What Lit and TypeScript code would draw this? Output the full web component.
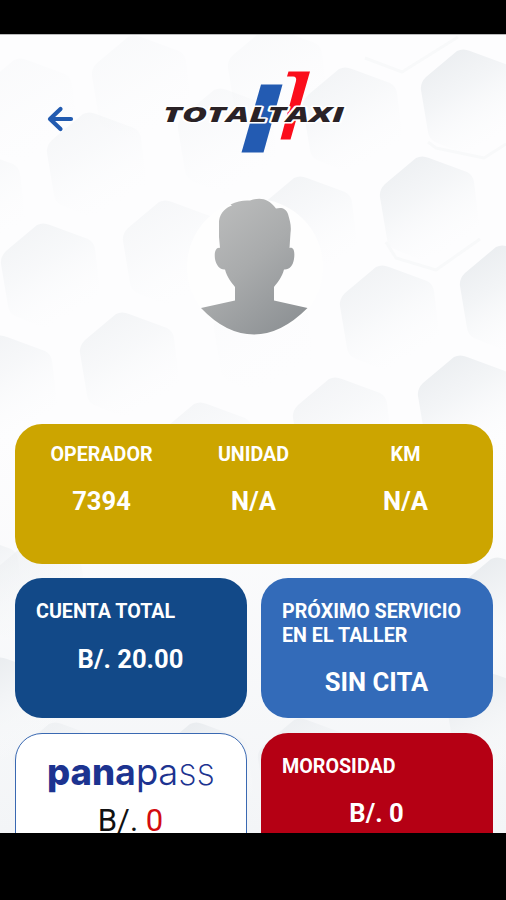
import { LitElement, html, svg, css } from "lit";
import { customElement } from "lit/decorators.js";

// x, y of the top corner of each hexagon, then its strength
const HEXES: [number, number, number][] = [
  [20, 5, 0.15], [134, -18, 0.2], [270, -26, 0.2], [345, 14, 0.5], [463, -4, 0.85],
  [89, 59, 0.35], [220, 35, 0.25], [-32, 95, 0.35], [422, 103, 0.75], [300, 123, 0.5],
  [165, 147, 0.35], [43, 170, 0.5], [382, 212, 0.6], [502, 192, 0.9], [122, 259, 0.5],
  [256, 235, 0.1], [0, 282, 0.55], [335, 324, 0.5], [460, 302, 0.85], [200, 349, 0.4],
  [-34, 480, 0.9], [497, 504, 1], [0, 604, 1], [196, 669, 1], [490, 620, 1], [30, 490, 0.5], [55, 669, 0.6], [300, 665, 0.7],
];

@customElement("tt-backdrop")
class Backdrop extends LitElement {
  static styles = css`
    :host { display: block; }
    svg { display: block; width: 100%; height: 100%; }
  `;
  render() {
    return html`<svg viewBox="0 0 506 799" preserveAspectRatio="xMidYMin slice">
      <defs>
        <linearGradient id="face" x1="0.25" y1="0.05" x2="0.7" y2="0.85">
          <stop offset="0" stop-color="#e9ecef" />
          <stop offset="0.4" stop-color="#f2f4f6" />
          <stop offset="1" stop-color="#fafbfc" stop-opacity="0" />
        </linearGradient>
        <linearGradient id="fade" x1="0" y1="0" x2="0" y2="1">
          <stop offset="0.5" stop-color="#f5f6f8" stop-opacity="0" />
          <stop offset="1" stop-color="#f3f5f7" />
        </linearGradient>
      </defs>
      <rect width="506" height="799" fill="#fdfdfe" />
      <rect width="506" height="799" fill="url(#fade)" />
      <g fill="none" stroke="#f8f9fa" stroke-width="3" stroke-linejoin="round">
        <path d="M365 24 L402 38 L458 3" />
        <path d="M428 108 L436 114 L484 124 L506 110" />
        <path d="M386 208 L396 224 L436 236 L480 205" />
      </g>
      ${HEXES.map(
        ([x, y, o]) => svg`<path transform="translate(${x} ${y + 40})" opacity=${o} fill="url(#face)"
          d="M-6 -19 Q0 -22 7 -19 L45 -5 Q51 -2 52 5 L57 46 Q58 53 52 58 L20 84 Q13 89 6 86 L-28 72 Q-34 69 -35 62 L-42 20 Q-43 13 -37 7 Z" />`
      )}
    </svg>`;
  }
}

@customElement("tt-logo")
class Logo extends LitElement {
  static styles = css`
    :host { display: block; width: 190px; height: 86px; }
    svg { display: block; width: 100%; height: 100%; overflow: visible; }
    .word { font: italic 800 21.5px "Open Sans", sans-serif; fill: #2a2226; }
    .halo { stroke: #fff; stroke-width: 3px; stroke-linejoin: round; paint-order: stroke; }
  `;
  render() {
    return html`<svg viewBox="0 0 190 86">
      <path d="M103 15.500 H124.500 L105.500 83.500 H83.500 Z" fill="#235bb2" />
      <path d="M130.500 2.500 H152 L132.500 70.500 H122.500 L138 12 Q139 7.500 135 7.500 H129 Z" fill="#fb0d1b" />
      <text class="word halo" x="5" y="52.500" textLength="181" lengthAdjust="spacingAndGlyphs">TOTALTAXI</text>
    </svg>`;
  }
}

@customElement("tt-avatar")
class Avatar extends LitElement {
  static styles = css`
    :host { display: block; width: 136px; height: 136px; border-radius: 50%; background: #fefefe; }
    svg { display: block; width: 100%; height: 100%; overflow: visible; }
  `;
  render() {
    return html`<svg viewBox="0 0 136 136">
      <defs>
        <linearGradient id="tone" x1="0.1" y1="0" x2="0.75" y2="1">
          <stop offset="0" stop-color="#bdbebe" />
          <stop offset="0.5" stop-color="#a9abac" />
          <stop offset="1" stop-color="#8e9295" />
        </linearGradient>
      </defs>
      <path fill="url(#tone)" d="M32 22 C33 13 40 8 45 6.500 L43.500 5.500 C50 2 57 1 63 1.500 C73 -2 81 -1 89 9.500 C94 8 99 9 101 15
        C103 22 104.500 27 103.500 34 L102.500 49 C107 48 108 53 107 60 C106 67 102 71 97 70.500 C95 78 91 83 87 88 V101.500
        L120.500 109 Q94 135.500 67 135.500 Q39 135.500 14 109 L48 101.500 V88 C44 83 40 78 38 70.500 C33 71 29 66 28 60 C27 53 29 48 33 49 L32 38 Z" />
    </svg>`;
  }
}

@customElement("app-root")
class AppRoot extends LitElement {
  static styles = css`
    * { box-sizing: border-box; }
    :host {
      display: block; height: 900px; padding: 34px 0 67px; background: #000; overflow: hidden;
      font-family: Roboto, sans-serif; color: #fff; box-sizing: border-box;
    }
    .screen {
      position: relative; height: 799px; overflow: hidden; isolation: isolate;
      border-top: 1px solid #b9babb;
    }
    tt-backdrop { position: absolute; inset: -1px 0 0 0; z-index: -1; }
    .header { display: grid; grid-template-columns: 1fr 190px 1fr; padding-top: 34px; align-items: center; height: 120px; }
    .back { width: 28px; height: 28px; margin-left: 46px; margin-top: 14px; padding: 0; border: 0; background: none; }
    .back svg { display: block; }
    tt-avatar { margin: 43.500px 0 0 186.500px; }
    .cards { display: grid; grid-template-columns: 232px 232px; gap: 14.700px 14px; margin: 89.300px 0 0 14.500px; grid-auto-rows: 140px; }
    .card { border-radius: 27px; padding: 21.600px 21.500px 0; }
    .stats { grid-column: span 2; display: grid; grid-template-columns: repeat(3, 152px); justify-content: center; padding: 19px 0 0; background: #cca500; text-align: center; }
    .total { background: #124988; }
    .service { background: #336bb9; }
    .late { background: #b50014; }
    .pass { background: #fff; border: 1.500px solid #3a69b2; padding-top: 20.800px; color: #111; }
    .label { font-size: 19.7px; font-weight: 700; line-height: 23.500px; white-space: nowrap; }
    .value { font-size: 25.6px; font-weight: 700; line-height: 30px; margin-top: 20px; text-align: center; white-space: nowrap; }
    .brand { display: block; width: 170px; height: 40px; margin: 0 auto; overflow: visible; }
    .brand text { font-family: Inter, sans-serif; font-size: 37px; fill: #1c3390; }
    .w8 { font-weight: 800; } .w6 { font-weight: 600; }
    .w4 { font-weight: 400; } .w3 { font-weight: 300; } .w1 { font-weight: 200; }
    .due { font-size: 31px; line-height: 36px; text-align: center; margin-top: 8px; }
    .zero { color: #d30b10; }
  `;

  private stats = [["OPERADOR", "7394"], ["UNIDAD", "N/A"], ["KM", "N/A"]];

  render() {
    return html`<main class="screen">
      <tt-backdrop></tt-backdrop>
      <header class="header">
        <button class="back" aria-label="Volver">
          <svg width="28" height="28" viewBox="0 0 28 28" fill="none" stroke="#225bb0" stroke-width="4.200" stroke-linecap="round" stroke-linejoin="round">
            <path d="M14.500 4 L4 14 L14.500 24 M4.500 14 H25" />
          </svg>
        </button>
        <tt-logo></tt-logo>
      </header>
      <tt-avatar></tt-avatar>
      <section class="cards">
        <div class="card stats">
          ${this.stats.map(([k, v]) => html`<div><div class="label">${k}</div><div class="value">${v}</div></div>`)}
        </div>
        <div class="card total"><div class="label">CUENTA TOTAL</div><div class="value">B/. 20.00</div></div>
        <div class="card service"><div class="label">PRÓXIMO SERVICIO<br />EN EL TALLER</div><div class="value">SIN CITA</div></div>
        <div class="card pass">
          <svg class="brand" viewBox="0 0 170 40">
            <text x="1" y="29.500" textLength="168" lengthAdjust="spacingAndGlyphs"><tspan class="w8">pan</tspan><tspan class="w6">a</tspan><tspan class="w4">p</tspan><tspan class="w3">a</tspan><tspan class="w1">ss</tspan></text>
          </svg>
          <div class="due">B/. <span class="zero">0</span></div>
        </div>
        <div class="card late"><div class="label">MOROSIDAD</div><div class="value">B/. 0</div></div>
      </section>
    </main>`;
  }
}
